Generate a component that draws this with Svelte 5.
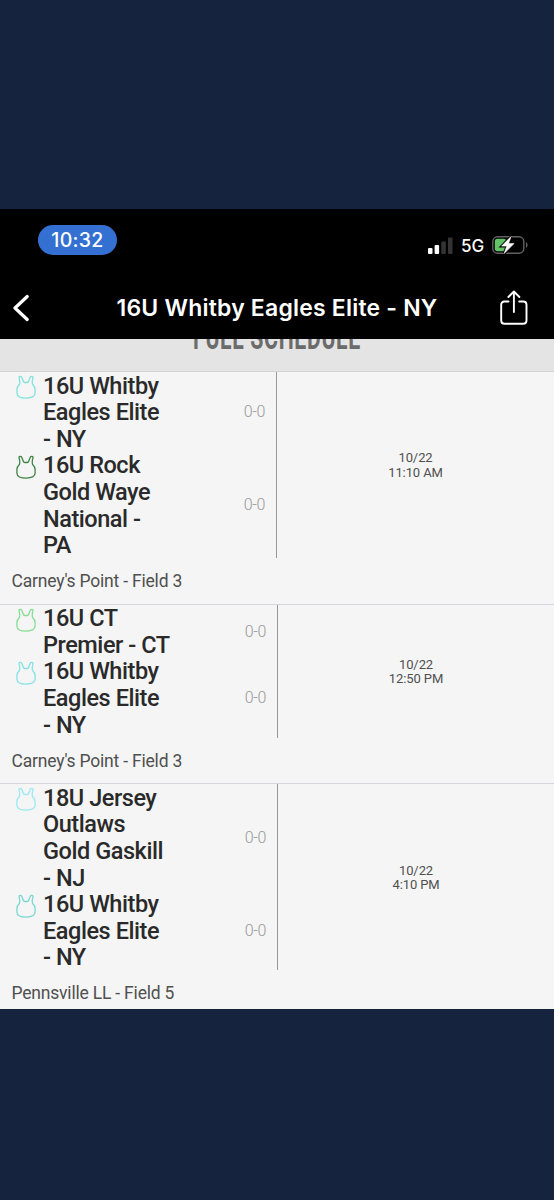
<script>
	const games = [
		{
			teams: [
				{ lines: ["16U Whitby", "Eagles Elite", "- NY"], color: "#7fe3dc", score: "0-0" },
				{ lines: ["16U Rock", "Gold Waye", "National -", "PA"], color: "#3d8544", score: "0-0" }
			],
			date: "10/22",
			time: "11:10 AM",
			field: "Carney's Point - Field 3"
		},
		{
			teams: [
				{ lines: ["16U CT", "Premier - CT"], color: "#86dd92", score: "0-0" },
				{ lines: ["16U Whitby", "Eagles Elite", "- NY"], color: "#84e2e4", score: "0-0" }
			],
			date: "10/22",
			time: "12:50 PM",
			field: "Carney's Point - Field 3"
		},
		{
			teams: [
				{ lines: ["18U Jersey", "Outlaws", "Gold Gaskill", "- NJ"], color: "#9be9f2", score: "0-0" },
				{ lines: ["16U Whitby", "Eagles Elite", "- NY"], color: "#78d8d0", score: "0-0" }
			],
			date: "10/22",
			time: "4:10 PM",
			field: "Pennsville LL - Field 5"
		}
	];
</script>

<div class="screen">
	<div class="phone">
		<header>
			<div class="status">
				<span class="clock">10:32</span>
				<div class="indicators">
					<svg width="25" height="17" viewBox="0 0 25 17">
						<rect x="0" y="11" width="4.5" height="6" rx="1" fill="#fff" />
						<rect x="6.6" y="8" width="4.5" height="9" rx="1" fill="#fff" />
						<rect x="13.3" y="4.5" width="4.5" height="12.5" rx="1" fill="#343434" />
						<rect x="20" y="0.5" width="4.5" height="16.5" rx="1" fill="#343434" />
					</svg>
					<span class="network">5G</span>
					<svg width="36" height="18" viewBox="0 0 36 18">
						<rect x="0.8" y="0.8" width="31" height="16.4" rx="4.8" fill="none" stroke="#626262" stroke-width="1.4" />
						<rect x="2.8" y="2.8" width="11.5" height="12.4" rx="2.6" fill="#62c466" />
						<path d="M34 6v6q1.6-1 1.6-3T34 6z" fill="#626262" />
						<path d="M19 .6 9.6 10.1h5.2l-2.7 7.4 9.9-9.9h-5.4z" fill="none" stroke="#000" stroke-width="2.6" />
						<path d="M19 .6 9.6 10.1h5.2l-2.7 7.4 9.9-9.9h-5.4z" fill="#fff" stroke="#fff" stroke-width="0.6" stroke-linejoin="round" />
					</svg>
				</div>
			</div>
			<div class="nav">
				<svg class="back" width="17" height="28" viewBox="0 0 17 28">
					<path d="M15.2 2.5 3 14l12.2 11.5" fill="none" stroke="#fff" stroke-width="3.2" stroke-linecap="round" stroke-linejoin="round" />
				</svg>
				<h1>16U Whitby Eagles Elite - NY</h1>
				<svg class="share" width="28" height="36" viewBox="0 0 28 36">
					<g fill="none" stroke="#fff" stroke-width="1.9" stroke-linecap="round" stroke-linejoin="round">
						<path d="M8.5 11.5H4.5q-3.3 0-3.3 3.3v15.7q0 3.3 3.3 3.3h18.7q3.3 0 3.3-3.3V14.800q0-3.3-3.3-3.3h-4" />
						<path d="M13.9 22V1.500M8.400 7l5.500-5.500L19.400 7" />
					</g>
				</svg>
			</div>
		</header>
		<div class="heading"><h2>FULL SCHEDULE</h2></div>
		{#each games as game}
			<section class="game">
				<div class="matchup">
					<div class="teams">
						{#each game.teams as team}
							<div class="team">
								<svg class="jersey" width="20" height="25" viewBox="0 0 20 25">
									<path
										d="M2.900 2.200C3.400 1 5.200 1 5.700 2.300l1.600 4q.4 1.200 1.500 1.200h2.400q1.100 0 1.500-1.200l1.600-4C14.800 1 16.600 1 17.100 2.200c-.9 3.400-1.300 6.300-.3 7.600 1.500 1.400 2.300 2.700 2.300 4.700v3.600c0 3.700-3.700 5-9.100 5s-9.100-1.300-9.100-5v-3.600c0-2 .8-3.300 2.300-4.700 1-1.300.6-4.200-.3-7.600z"
										fill="none" stroke={team.color} stroke-width="1.3" stroke-linejoin="round" />
								</svg>
								<div class="name">
									{#each team.lines as line}
										<div>{line}</div>
									{/each}
								</div>
								<span class="score">{team.score}</span>
							</div>
						{/each}
					</div>
					<div class="when">
						<div>{game.date}</div>
						<div>{game.time}</div>
					</div>
				</div>
				<div class="field">{game.field}</div>
			</section>
		{/each}
	</div>
</div>

<style>
	:global(body) {
		background: #15233f;
	}

	.screen {
		height: 1200px;
		padding-top: 209px;
		box-sizing: border-box;
		overflow: hidden;
		background: #15233f;
		font-family: Roboto, sans-serif;
	}

	.phone {
		height: 799.5px;
		overflow: hidden;
		background: #f5f5f5;
	}

	header {
		height: 130px;
		background: #000;
		color: #fff;
		font-family: Inter, sans-serif;
	}

	.status {
		display: flex;
		justify-content: space-between;
		height: 68px;
		padding: 16px 26px 0 38px;
		box-sizing: border-box;
	}

	.clock {
		width: 79px;
		height: 30px;
		line-height: 31px;
		border-radius: 15px;
		background: #3470d2;
		text-align: center;
		font-size: 19.5px;
		font-weight: 500;
		letter-spacing: 0.3px;
	}

	.indicators {
		display: flex;
		align-items: center;
		height: 40px;
	}

	.network {
		width: 24px;
		margin: 1px 7px 0 8px;
		font-size: 17px;
		font-weight: 500;
		letter-spacing: -0.1px;
	}

	.nav {
		display: grid;
		grid-template-columns: 28px 1fr 28px;
		align-items: center;
		height: 62px;
		padding: 0 26px 0 12px;
	}

	h1 {
		margin: 0;
		padding-left: 14px;
		text-align: center;
		font-size: 23px;
		font-weight: 600;
		letter-spacing: 0.2px;
		white-space: nowrap;
	}

	.heading {
		height: 33px;
		box-sizing: border-box;
		border-bottom: 1px solid #d4d4d4;
		background: #e4e4e4;
		overflow: hidden;
		text-align: center;
	}

	h2 {
		margin: -17px 0 0;
		font-size: 33px;
		line-height: 32px;
		font-weight: 700;
		letter-spacing: 1px;
		color: #6b6b6b;
		transform: scaleX(0.645);
	}

	.game + .game {
		border-top: 1px solid #d6d7dc;
	}

	.matchup {
		display: flex;
	}

	.teams {
		width: 277px;
		box-sizing: border-box;
		border-right: 1.5px solid #999;
	}

	.team {
		display: flex;
		align-items: flex-start;
		padding: 0 11px 0 16px;
	}

	.game + .game .teams {
		width: 278px;
	}

	.jersey {
		margin: 3px 7px 0 0;
		flex: none;
	}

	.name {
		flex: 1;
		padding-top: 0.6px;
		margin-bottom: -0.6px;
		font-size: 23.5px;
		line-height: 26.6px;
		font-weight: 500;
		letter-spacing: -0.45px;
		color: #2a2a2a;
		white-space: nowrap;
	}

	.score {
		align-self: center;
		font-size: 16px;
		font-weight: 300;
		letter-spacing: -0.4px;
		color: #999;
	}

	.when {
		flex: 1;
		align-self: center;
		padding-top: 2px;
		text-align: center;
		font-size: 13px;
		line-height: 14.6px;
		letter-spacing: -0.1px;
		color: #505050;
	}

	.field {
		height: 45.5px;
		padding-left: 11.5px;
		font-size: 17.5px;
		line-height: 46px;
		letter-spacing: -0.2px;
		color: #505050;
	}
</style>
